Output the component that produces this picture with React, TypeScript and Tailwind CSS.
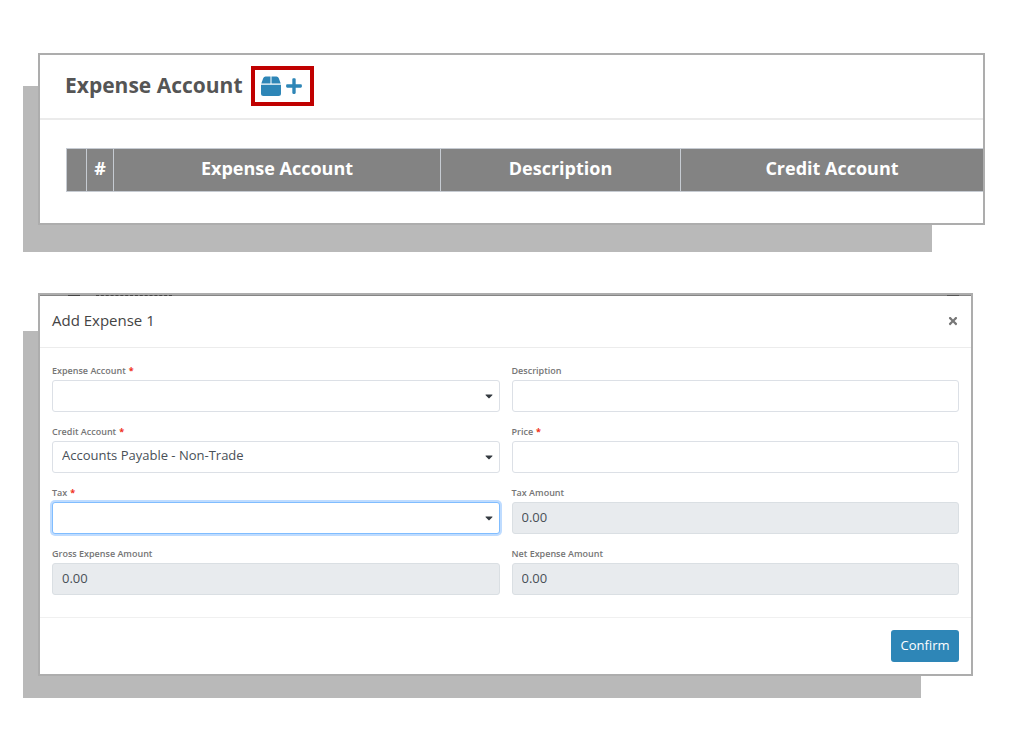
import type { ReactNode } from 'react'
import { FaBox, FaCaretDown, FaPlus, FaTimes } from 'react-icons/fa'

type Field = {
  id: string
  label: string
  kind: 'select' | 'text' | 'readonly'
  value?: string
  required?: boolean
  active?: boolean
}

const fields: Field[] = [
  { id: 'expense-account', label: 'Expense Account', kind: 'select', required: true },
  { id: 'description', label: 'Description', kind: 'text' },
  { id: 'credit-account', label: 'Credit Account', kind: 'select', value: 'Accounts Payable - Non-Trade', required: true },
  { id: 'price', label: 'Price', kind: 'text', required: true },
  { id: 'tax', label: 'Tax', kind: 'select', required: true, active: true },
  { id: 'tax-amount', label: 'Tax Amount', kind: 'readonly', value: '0.00' },
  { id: 'gross-amount', label: 'Gross Expense Amount', kind: 'readonly', value: '0.00' },
  { id: 'net-amount', label: 'Net Expense Amount', kind: 'readonly', value: '0.00' },
]

const columns = [
  { label: '', width: 'w-[20px]' },
  { label: '#', width: 'w-[27px]' },
  { label: 'Expense Account', width: 'w-[327px]' },
  { label: 'Description', width: 'w-[240px]' },
  { label: 'Credit Account', width: '' },
]

const controlClass = 'block h-8 w-full rounded-[3px] border px-[9px] pb-[2px] text-[13px] text-[#495057] outline-none'

function Panel({ shadow, children }: { shadow: string; children: ReactNode }) {
  return (
    <div className="relative isolate">
      <div className={`absolute -z-10 bg-[#b9b9b9] ${shadow}`} />
      <div className="border-2 border-[#adadad] bg-white">{children}</div>
    </div>
  )
}

function FormField({ field }: { field: Field }) {
  const { id, label, kind, value = '', required, active } = field
  return (
    <div>
      <label htmlFor={id} className="flex h-[14px] gap-[3px] text-[9px] leading-[10px] font-semibold text-[#757575]">
        {label}
        {required && <span className="font-bold text-[#f03020]">*</span>}
      </label>
      {kind === 'select' ? (
        <div className="relative">
          <select
            id={id}
            defaultValue={value}
            className={`${controlClass} appearance-none bg-white ${active ? 'border-[#80bdff] ring-2 ring-[#bfdcff]' : 'border-[#dce0e6]'}`}
          >
            <option value={value}>{value}</option>
          </select>
          <FaCaretDown className="pointer-events-none absolute top-[10px] right-[5px] h-3 w-3 text-[#343a40]" />
        </div>
      ) : (
        <input
          id={id}
          type="text"
          defaultValue={value}
          readOnly={kind === 'readonly'}
          className={`${controlClass} ${kind === 'readonly' ? 'border-[#dadfe3] bg-[#e8ebee]' : 'border-[#dce0e6] bg-white'}`}
        />
      )}
    </div>
  )
}

function ExpensePanel() {
  return (
    <Panel shadow="top-[33px] right-[53px] -bottom-[27px] -left-[15px]">
      <div className="flex h-[65px] items-center gap-2 border-b-2 border-[#ebebeb] pb-[2px] pl-[25px]">
        <h2 className="text-[21px] font-bold text-[#555]">Expense Account</h2>
        <button
          type="button"
          aria-label="Add expense"
          className="flex h-10 w-[63px] items-center justify-center gap-1 border-4 border-[#c00000] text-[#2e86b7]"
        >
          {/* carton with rounded shoulders */}
          <svg viewBox="0 0 20 20" className="h-5 w-5" fill="currentColor" aria-hidden="true">
            <path d="M4.5 0.5h5v7H0.3L2.3 2Q2.9 0.5 4.5 0.5zM10.5 0.5h5Q17.1 0.5 17.7 2L19.7 7.5H10.5zM0 8.8h20V17.5Q20 20 17.5 20h-15Q0 20 0 17.5z" />
          </svg>
          <FaPlus className="h-[18px] w-[18px]" />
        </button>
      </div>
      <div className="pt-[28px] pb-[31px] pl-[26px]">
        <table className="w-full table-fixed border-collapse bg-[#838383] text-lg leading-6 font-bold text-white">
          <thead>
            <tr>
              {columns.map((col) => (
                <th key={col.label} scope="col" className={`h-[43px] border border-r-0 border-[#c6cbd2] p-0 pb-1 ${col.width}`}>
                  {col.label}
                </th>
              ))}
            </tr>
          </thead>
        </table>
      </div>
    </Panel>
  )
}

function AddExpenseDialog() {
  return (
    <Panel shadow="top-[38px] right-[52px] -bottom-[22px] -left-[15px]">
      {/* page behind the dialog, cut off just above its header */}
      <div className="flex h-px justify-between bg-[#858585] pr-3 pl-[28px]">
        <div className="flex gap-4">
          <span className="w-3 bg-[#444]" />
          <span className="w-[76px] border-b border-dashed border-[#444]" />
        </div>
        <span className="w-3 bg-[#555]" />
      </div>
      <div className="flex h-[52px] items-center justify-between border-b border-[#ececec] pr-3 pb-[2px] pl-3">
        <h2 className="text-[15px] text-[#444]">Add Expense 1</h2>
        <button type="button" aria-label="Close" className="text-[#777]">
          <FaTimes className="h-3 w-3" />
        </button>
      </div>
      <form>
        <div className="grid grid-cols-2 gap-x-3 gap-y-[15px] px-3 pt-[18px] pb-[22px]">
          {fields.map((field) => (
            <FormField key={field.id} field={field} />
          ))}
        </div>
        <div className="flex justify-end border-t border-[#f0f0f0] p-3">
          <button type="button" className="h-8 w-[68px] rounded-[3px] bg-[#2e86b7] text-[13px] text-white">
            Confirm
          </button>
        </div>
      </form>
    </Panel>
  )
}

export default function App() {
  return (
    <main className="flex min-h-screen flex-col gap-[68px] bg-white pt-[53px] pr-[39px] pb-[68px] pl-[38px] font-['Trebuchet_MS','Open_Sans',sans-serif]">
      <ExpensePanel />
      <div className="pr-3">
        <AddExpenseDialog />
      </div>
    </main>
  )
}
